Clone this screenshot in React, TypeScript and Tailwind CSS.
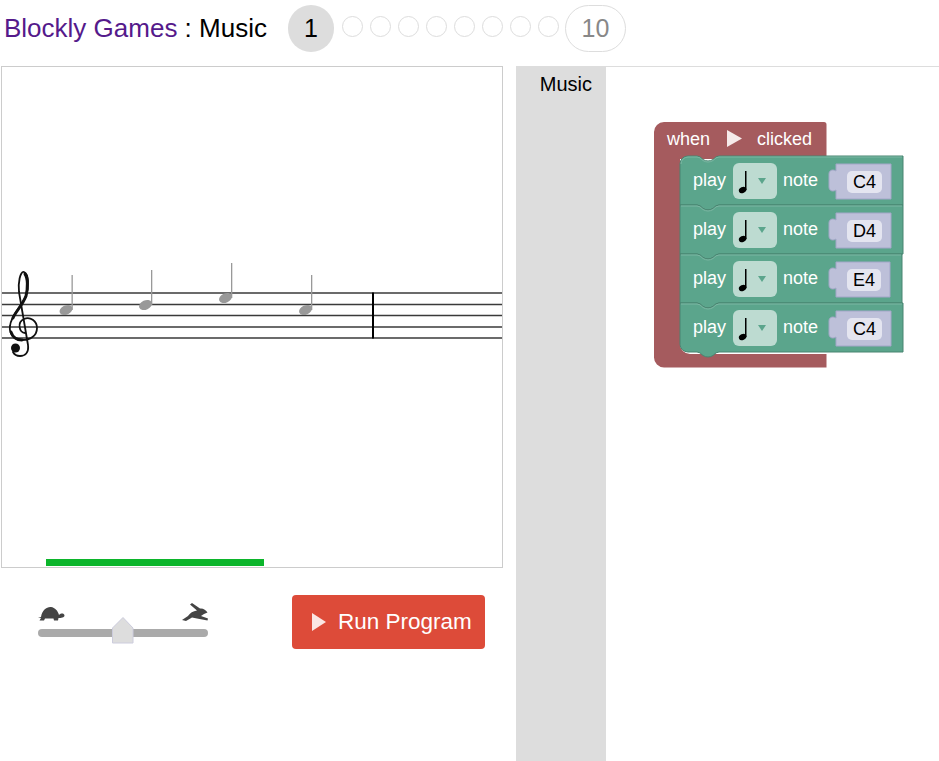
const DOTS = [2, 3, 4, 5, 6, 7, 8, 9];

const NOTES = [
  { x: 66, y: 310, top: 275 },
  { x: 145.5, y: 305, top: 270 },
  { x: 225.5, y: 298, top: 263 },
  { x: 305.5, y: 310, top: 275 },
];

const BLOCKS = [
  { top: 157, right: 903, note: "C4" },
  { top: 206, right: 903, note: "D4" },
  { top: 255, right: 902, note: "E4" },
  { top: 304, right: 903, note: "C4" },
];

function notchPath(y: number) {
  return `H697 q3 0 6 3.5 q2.5 1.5 5 1.5 q2.5 0 5 -1.5 q3 -3.5 6 -3.5 V${y}`;
}

function tabPathBack(y: number) {
  return `H719 q-3 0 -6 3.5 q-2.5 1.5 -5 1.5 q-2.5 0 -5 -1.5 q-3 -3.5 -6 -3.5 V${y}`;
}

function PlayBlock({ top, right, note, first, last }: { top: number; right: number; note: string; first: boolean; last: boolean }) {
  const bottom = top + 49;
  const valueRight = right - 12;
  const fieldRight = right - 21;
  const outline =
    (first ? `M680 ${top + 8} a8 8 0 0 1 8 -8 ` : `M680 ${top} `) +
    notchPath(top) +
    ` H${right} V${bottom} ` +
    tabPathBack(bottom) +
    (last ? ` H688 a8 8 0 0 1 -8 -8 Z` : ` H680 Z`);

  return (
    <g>
      <path d={outline} fill="#5ba58c" stroke="#498470" strokeWidth="1" />
      <path d={(first ? `M681 ${top + 8} a7 7 0 0 1 7 -7 ` : `M681 ${top + 1} `) + notchPath(top + 1) + ` H${right - 1}`} fill="none" stroke="#7cb7a3" strokeWidth="1" />
      <text x="693" y={top + 30} fontSize="18" fill="#fff">play</text>
      <rect x="733" y={top + 7} width="44" height="36" rx="6" fill="#bddbd1" />
      <rect x="745" y={top + 15} width="1.5" height="19" fill="#000" />
      <ellipse cx="742.6" cy={top + 34} rx="3.9" ry="2.9" transform={`rotate(-25 742.6 ${top + 34})`} fill="#000" />
      <path d={`M758 ${top + 22} h8 l-4 6 Z`} fill="#5ba58c" />
      <text x="783" y={top + 30} fontSize="18" fill="#fff">note</text>
      <path
        d={`M836 ${top + 8} H${valueRight} V${top + 43} H836 V${top + 34} c-3 2 -7 1 -7 -3 V${top + 18} c0 -4 4 -5 7 -3 Z`}
        fill="#bdc0d9"
        stroke="#a3a6c8"
        strokeWidth="1"
      />
      <rect x="847" y={top + 15} width={fieldRight - 847} height="22" rx="5" fill="#e4e5f0" />
      <text x={(847 + fieldRight) / 2} y={top + 32} fontSize="18" fill="#000" textAnchor="middle">{note}</text>
    </g>
  );
}

function BlockStack() {
  return (
    <svg width="260" height="255" viewBox="650 120 260 255">
      <path
        d="M654 133 a10 10 0 0 1 10 -10 H824 a2.500 2.500 0 0 1 2.500 2.500 V160 H680 V345 a10 10 0 0 0 10 10 H826.500 V368.500 H664 a10 10 0 0 1 -10 -10 Z"
        fill="#a55b5e"
      />
      <text x="667" y="146" fontSize="18" fill="#fff">when</text>
      <path d="M727 131 L742 139.500 L727 148 Z" fill="#f6eaea" />
      <text x="757" y="146" fontSize="18" fill="#fff">clicked</text>
      {BLOCKS.map((b, i) => (
        <PlayBlock key={b.top} top={b.top} right={b.right} note={b.note} first={i === 0} last={i === BLOCKS.length - 1} />
      ))}
    </svg>
  );
}

function MusicCanvas() {
  return (
    <svg className="block" width="500" height="500" viewBox="2 67 500 500">
      {[293, 304.5, 315.5, 327, 338].map((y) => (
        <line key={y} x1="2" x2="502" y1={y} y2={y} stroke="#3a3a3a" strokeWidth="1.400" />
      ))}
      <rect x="372" y="292.500" width="2" height="46" fill="#000" />
      <g fill="none" stroke="#111" strokeLinecap="round">
        <path d="M25 333 C19 333 17 322 24 319 C30 316 37 321 37 328 C37 336 30 340 22 340 C13 340 9 333 10 326 C11 315 22 306 26 296 C29 287 29 274 24 272 C20 271 18 283 19 292 L28 345 C29 353 25 356 20 356 C17 356 14 354 13 352" strokeWidth="1.800" />
        <path d="M13 318 C16 311 22 306 26 296 C28 288 28 278 25 274" strokeWidth="3" />
        <path d="M11 332 C13 338 18 340 22 340" strokeWidth="2.800" />
      </g>
      <circle cx="15.500" cy="348" r="4.500" fill="#111" />
      {NOTES.map((n) => (
        <g key={n.x} fill="#999">
          <rect x={n.x + 5.5} y={n.top} width="1.300" height={n.y - n.top} />
          <ellipse cx={n.x} cy={n.y} rx="6.800" ry="4.600" transform={`rotate(-25 ${n.x} ${n.y})`} />
        </g>
      ))}
      <rect x="46" y="559" width="218" height="7" fill="#0cb52b" />
    </svg>
  );
}

function SpeedSlider() {
  return (
    <svg className="mt-[5px] ml-[33px]" width="178" height="50" viewBox="34 600 178 50">
      <rect x="38" y="629" width="170" height="8" rx="4" fill="#aaa" />
      <path d="M123 617.500 L133 628 V643 H112.500 V628 Z" fill="#ddd" stroke="#ccd" strokeWidth="1" />
      <g fill="#444">
        <path d="M41 617 C42 610 47 606.500 51 607 C55 607.500 58 611 59 615 C61 613 64 613 64.500 615.500 C64.500 617.500 61 618 58.500 618 L58 620.500 H54 L53.500 618.500 H45 L44 620.500 H39.500 L41 618 L38 618 Z" />
        <path d="M182 620 L188 616 C190 613 193 611 197 610.500 L190 604.500 L192 603 L200 608.500 C203 608 206 610 207.500 612.500 L204 614 L201 616 L208 618.500 L207.500 620.500 L197 618.500 L192 617.500 L186 621 Z" />
      </g>
    </svg>
  );
}

export default function App() {
  return (
    <div className="h-screen overflow-hidden bg-white font-[Liberation_Sans,Arial,sans-serif] text-black">
      <div className="flex items-start pt-[5px] pl-[4px] h-[66px]">
        <h1 className="text-[26px] leading-[47px] font-normal whitespace-nowrap">
          <span className="text-[#551a8b]">Blockly Games</span> : Music
        </h1>
        <div className="flex items-start gap-[7px] ml-[21px]">
          <div className="flex items-center justify-center w-[46px] h-[47px] mr-px rounded-full bg-[#ddd] text-[25px]">1</div>
          {DOTS.map((d) => (
            <div key={d} className="w-[21px] h-[21px] mt-[11px] rounded-full border border-[#ddd]" />
          ))}
          <div className="flex items-center justify-center w-[61px] h-[47px] -ml-px rounded-full border border-[#ddd] text-[25px] text-[#888]">10</div>
        </div>
      </div>

      <div className="flex h-[695px]">
        <div className="w-[516px] pl-px shrink-0">
          <div className="w-[502px] h-[502px] border border-[#ccc]">
            <MusicCanvas />
          </div>
          <div className="flex items-start justify-between w-[502px] pr-[18px] mt-[27px]">
            <SpeedSlider />
            <button className="flex items-center w-[193px] h-[54px] pl-[20px] rounded bg-[#dd4b39] text-[22.500px] text-white">
              <svg className="mr-[12px]" width="14" height="18" viewBox="0 0 14 18">
                <path d="M0 0 L14 9 L0 18 Z" fill="#fbe6e3" />
              </svg>
              Run Program
            </button>
          </div>
        </div>

        <div className="w-[90px] shrink-0 bg-[#ddd] pt-[7px] pr-[14px] text-right text-[20px] leading-[23px]">Music</div>

        <div className="flex-1 border-t border-[#ddd] pl-[44px] pt-[52px]">
          <BlockStack />
        </div>
      </div>
    </div>
  );
}
